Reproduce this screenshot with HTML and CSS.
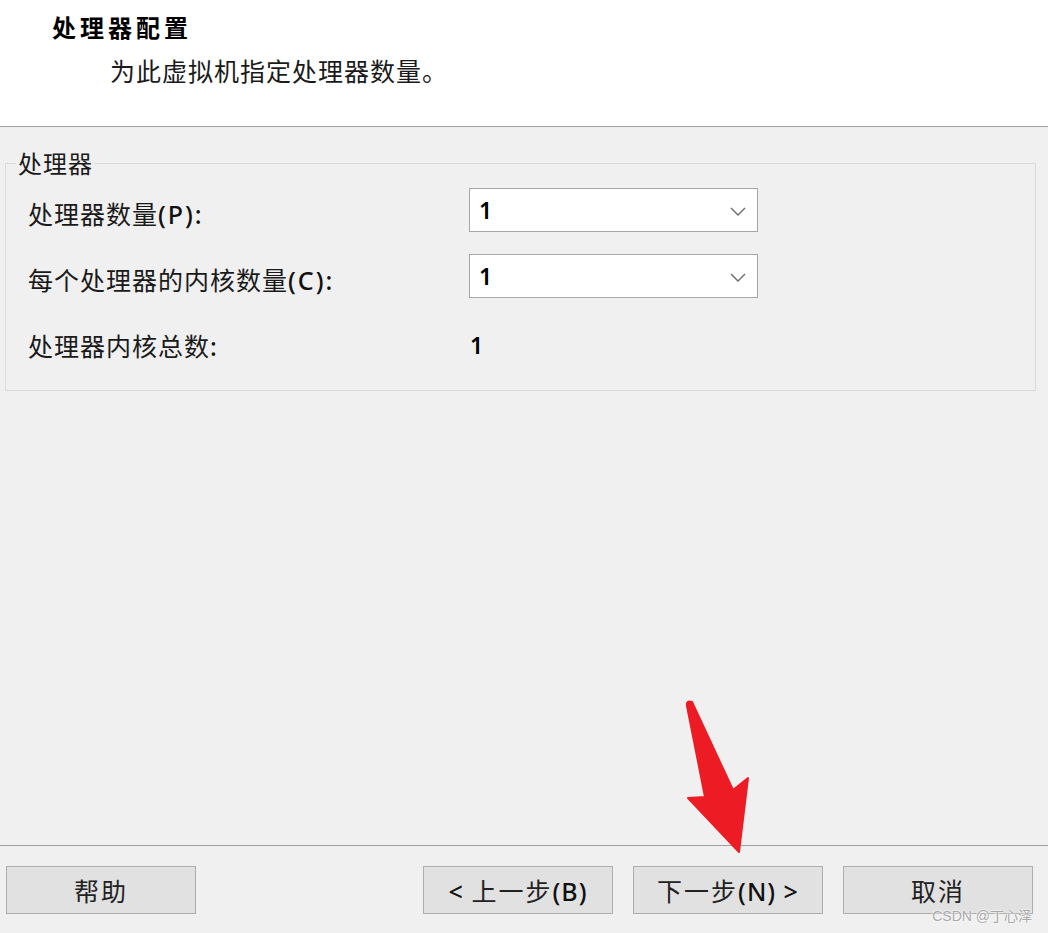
FILE: index.html
```html
<!DOCTYPE html>
<html lang="zh-CN">
<head>
<meta charset="utf-8">
<title>处理器配置</title>
<link rel="stylesheet" href="styles.css">
</head>
<body>
<div class="wizard">
  <header class="head">
    <div class="title">处理器配置</div>
    <div class="subtitle">为此虚拟机指定处理器数量。</div>
  </header>
  <main class="body">
    <fieldset class="group">
      <legend class="legend">处理器</legend>
      <div class="rows">
        <div class="label">处理器数量<span class="en">(P):</span></div>
        <div class="combo"><span class="val">1</span><svg class="chev" width="16" height="9" viewBox="0 0 16 9"><path d="M1 1 L8 8 L15 1" fill="none" stroke="#6b6b6b" stroke-width="1.4"/></svg></div>
        <div class="label">每个处理器的内核数量<span class="en">(C):</span></div>
        <div class="combo"><span class="val">1</span><svg class="chev" width="16" height="9" viewBox="0 0 16 9"><path d="M1 1 L8 8 L15 1" fill="none" stroke="#6b6b6b" stroke-width="1.4"/></svg></div>
        <div class="label">处理器内核总数<span class="en">:</span></div>
        <div class="total">1</div>
      </div>
    </fieldset>
  </main>
  <footer class="foot">
    <button class="btn">帮助</button>
    <div class="spacer"></div>
    <button class="btn"><span class="en">&lt;</span> 上一步<span class="en">(B)</span></button>
    <button class="btn">下一步<span class="en">(N) &gt;</span></button>
    <button class="btn">取消</button>
  </footer>
  <svg class="arrow" width="1048" height="933" viewBox="0 0 1048 933">
    <path d="M687 706 Q686 700 692 702 L733 790 L748 778 L739 852 L688 798 L705 797 Z" fill="#ed1c24" stroke="#ed1c24" stroke-width="2" stroke-linejoin="round"/>
  </svg>
  <div class="watermark">CSDN @丁心泽</div>
</div>
</body>
</html>
```

FILE: styles.css
```css
* { box-sizing: border-box; }
html, body { margin: 0; padding: 0; }
body {
  background: #f0f0f0;
  font-family: "Noto Sans", "Noto Sans CJK SC", sans-serif;
  color: #1a1a1a;
}
.wizard {
  position: relative;
  width: 1048px;
  height: 933px;
  display: flex;
  flex-direction: column;
  overflow: hidden;
}
.head {
  height: 127px;
  background: #ffffff;
  border-bottom: 1px solid #a0a0a0;
  padding-top: 12px;
  flex: none;
}
.title {
  padding-left: 52px;
  font-family: "Noto Sans CJK SC", sans-serif;
  font-weight: 700;
  font-size: 24px;
  letter-spacing: 4px;
  line-height: 30px;
  color: #000;
}
.subtitle {
  padding-left: 110px;
  margin-top: 13px;
  font-family: "Noto Sans CJK SC", sans-serif;
  font-size: 25px;
  letter-spacing: 1px;
  line-height: 30px;
  color: #1a1a1a;
}
.body {
  flex: 1;
  padding: 23px 12px 0 5px;
}
.group {
  margin: 0;
  padding: 12px 0 26px 0;
  border: 1px solid #dadada;
}
.legend {
  margin-left: 10px;
  padding: 0 2px;
  font-family: "Noto Sans CJK SC", sans-serif;
  font-size: 24px;
  letter-spacing: 1px;
  line-height: 26px;
  color: #1a1a1a;
}
.rows {
  display: grid;
  grid-template-columns: 441px 289px;
  grid-auto-rows: 44px;
  row-gap: 22px;
  align-items: center;
  padding-left: 22px;
}
.label {
  font-family: "Noto Sans CJK SC", sans-serif;
  font-size: 25px;
  letter-spacing: 1px;
  line-height: 30px;
  padding-top: 6px;
  color: #1a1a1a;
}
.en {
  font-family: "Noto Sans", sans-serif;
  font-weight: 500;
  letter-spacing: 2px;
  color: #111;
}
.combo {
  height: 44px;
  background: #fff;
  border: 1px solid #a6a6a6;
  display: flex;
  align-items: center;
  justify-content: space-between;
  padding: 0 11px 0 9px;
}
.val, .total {
  font-size: 23px;
  font-weight: 600;
  color: #000;
}
.total {
  padding-left: 1px;
  padding-top: 6px;
}
.chev { display: block; margin-top: 2px; }
.foot {
  flex: none;
  height: 88px;
  border-top: 1px solid #a0a0a0;
  display: flex;
  align-items: flex-start;
  gap: 20px;
  padding: 20px 15px 0 6px;
}
.spacer { flex: 1; }
.btn {
  width: 190px;
  height: 48px;
  background: #e1e1e1;
  border: 1px solid #adadad;
  border-radius: 0;
  font-family: "Noto Sans CJK SC", sans-serif;
  font-size: 25px;
  letter-spacing: 2px;
  color: #222;
  padding: 0;
  line-height: 46px;
}
.btn .en { letter-spacing: 1px; }
.arrow {
  position: absolute;
  left: 0;
  top: 0;
  pointer-events: none;
}
.watermark {
  position: absolute;
  right: 16px;
  top: 905px;
  font-family: "Liberation Sans", "Noto Sans CJK SC", sans-serif;
  font-size: 14px;
  color: #a8a8a8;
  text-shadow: 0 0 2px #fff, 0 0 2px #fff;
}
```
